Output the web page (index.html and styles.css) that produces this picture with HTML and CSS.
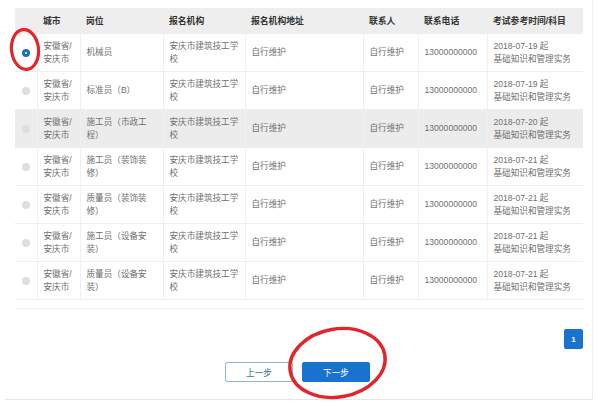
FILE: index.html
```html
<!DOCTYPE html>
<html lang="zh-CN">
<head>
<meta charset="utf-8">
<title>报名机构选择</title>
<link rel="stylesheet" href="styles.css">
</head>
<body>
<div class="frame">
  <table class="grid">
    <colgroup>
      <col class="c-radio"><col class="c-city"><col class="c-post"><col class="c-org"><col class="c-addr"><col class="c-contact"><col class="c-phone"><col class="c-time">
    </colgroup>
    <thead>
      <tr><th></th><th>城市</th><th>岗位</th><th>报名机构</th><th>报名机构地址</th><th>联系人</th><th>联系电话</th><th>考试参考时间/科目</th></tr>
    </thead>
    <tbody>
      <tr><td class="rc"><span class="radio on"></span></td><td>安徽省/<br>安庆市</td><td>机械员</td><td>安庆市建筑技工学<br>校</td><td>自行维护</td><td>自行维护</td><td>13000000000</td><td>2018-07-19 起<br>基础知识和管理实务</td></tr>
      <tr><td class="rc"><span class="radio"></span></td><td>安徽省/<br>安庆市</td><td>标准员（B）</td><td>安庆市建筑技工学<br>校</td><td>自行维护</td><td>自行维护</td><td>13000000000</td><td>2018-07-19 起<br>基础知识和管理实务</td></tr>
      <tr class="hover"><td class="rc"><span class="radio"></span></td><td>安徽省/<br>安庆市</td><td>施工员（市政工<br>程）</td><td>安庆市建筑技工学<br>校</td><td>自行维护</td><td>自行维护</td><td>13000000000</td><td>2018-07-20 起<br>基础知识和管理实务</td></tr>
      <tr><td class="rc"><span class="radio"></span></td><td>安徽省/<br>安庆市</td><td>施工员（装饰装<br>修）</td><td>安庆市建筑技工学<br>校</td><td>自行维护</td><td>自行维护</td><td>13000000000</td><td>2018-07-21 起<br>基础知识和管理实务</td></tr>
      <tr><td class="rc"><span class="radio"></span></td><td>安徽省/<br>安庆市</td><td>质量员（装饰装<br>修）</td><td>安庆市建筑技工学<br>校</td><td>自行维护</td><td>自行维护</td><td>13000000000</td><td>2018-07-21 起<br>基础知识和管理实务</td></tr>
      <tr><td class="rc"><span class="radio"></span></td><td>安徽省/<br>安庆市</td><td>施工员（设备安<br>装）</td><td>安庆市建筑技工学<br>校</td><td>自行维护</td><td>自行维护</td><td>13000000000</td><td>2018-07-21 起<br>基础知识和管理实务</td></tr>
      <tr><td class="rc"><span class="radio"></span></td><td>安徽省/<br>安庆市</td><td>质量员（设备安<br>装）</td><td>安庆市建筑技工学<br>校</td><td>自行维护</td><td>自行维护</td><td>13000000000</td><td>2018-07-21 起<br>基础知识和管理实务</td></tr>
    </tbody>
  </table>
  <div class="pager"><span class="page-btn">1</span></div>
  <div class="actions">
    <button class="btn btn-prev" type="button">上一步</button>
    <button class="btn btn-next" type="button">下一步</button>
  </div>
</div>
<svg class="marks" width="598" height="403" viewBox="0 0 598 403">
  <ellipse cx="25" cy="49.5" rx="13.5" ry="20" fill="none" stroke="#e0262b" stroke-width="3.2" transform="rotate(-6 25 49.5)"/>
  <ellipse cx="337.5" cy="363" rx="48" ry="34" fill="none" stroke="#e0262b" stroke-width="3.4" transform="rotate(-10 337.5 363)"/>
</svg>
</body>
</html>
```
FILE: styles.css
```css
html, body {
  margin: 0;
  padding: 0;
  background: #fff;
}
body {
  width: 598px;
  height: 403px;
  overflow: hidden;
  position: relative;
  font-family: "Liberation Sans", "Noto Sans CJK SC", sans-serif;
  color: #666;
}
.frame {
  box-sizing: border-box;
  margin-left: 5px;
  width: 588px;
  height: 400px;
  padding: 8px 0 0 10px;
  border-right: 1px solid #eeeeee;
  border-bottom: 1px solid #e6e6e6;
}
.grid {
  width: 568px;
  table-layout: fixed;
  border-collapse: collapse;
  font-size: 8.6px;
  line-height: 13px;
}
.c-radio { width: 22px; }
.c-city { width: 43px; }
.c-post { width: 83px; }
.c-org { width: 82px; }
.c-addr { width: 118px; }
.c-contact { width: 55px; }
.c-phone { width: 69px; }
.c-time { width: 96px; }
.grid th {
  height: 25px;
  padding: 1px 0 0 6px;
  background: #eeeeee;
  color: #333;
  font-weight: bold;
  text-align: left;
  font-size: 8.8px;
}
.grid td {
  height: 37px;
  padding: 0 0 0 6px;
  border-bottom: 1px solid #eeeeee;
  border-left: 1px solid #f0f0f0;
  vertical-align: middle;
  color: #707070;
}
.grid td.rc {
  border-left: none;
  padding: 0 0 0 7px;
}
.grid tr.hover td {
  background: #ececec;
}
.radio {
  display: block;
  width: 8px;
  height: 8px;
  border-radius: 50%;
  background: #dedede;
}
.radio.on {
  box-sizing: border-box;
  background: #fff;
  border: 3px solid #1f6fbf;
}
.pager {
  width: 568px;
  margin-top: 8px;
  border-top: 1px solid #eeeeee;
  padding-top: 20px;
  display: flex;
  justify-content: flex-end;
}
.page-btn {
  width: 19px;
  height: 20px;
  border-radius: 2px;
  background: #1a72cf;
  color: #fff;
  font-size: 8px;
  font-weight: bold;
  display: flex;
  align-items: center;
  justify-content: center;
}
.actions {
  display: flex;
  justify-content: center;
  gap: 9px;
  margin-top: 13px;
  margin-left: -12px;
}
.btn {
  box-sizing: border-box;
  width: 68px;
  height: 20px;
  border-radius: 2px;
  font-family: "Liberation Sans", "Noto Sans CJK SC", sans-serif;
  font-size: 8.6px;
  padding: 0;
}
.btn-prev {
  background: #fff;
  border: 1px solid #8fb4cf;
  color: #2f6ea8;
}
.btn-next {
  background: #1a72cf;
  border: 1px solid #1a72cf;
  color: #fff;
}
.marks {
  position: absolute;
  left: 0;
  top: 0;
  pointer-events: none;
}
```
